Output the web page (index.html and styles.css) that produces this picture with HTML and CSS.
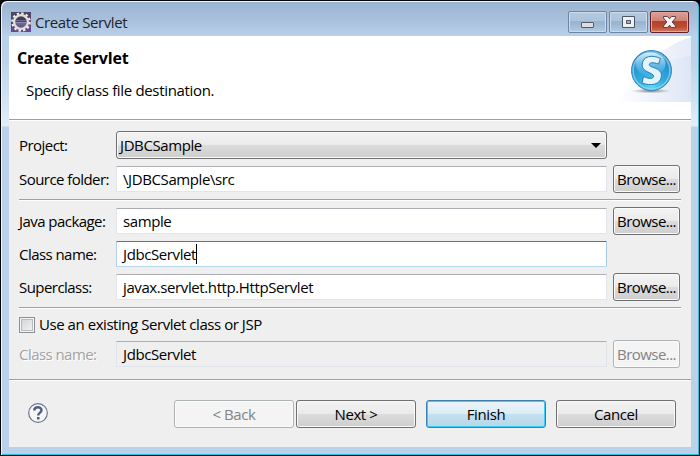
FILE: index.html
```
<!DOCTYPE html>
<html lang="en">
<head>
<meta charset="utf-8">
<title>Create Servlet</title>
<link rel="stylesheet" href="styles.css">
</head>
<body>
<div class="window">
  <div class="titlebar">
    <svg class="app-icon" width="20" height="20" viewBox="0 0 20 20">
      <defs><linearGradient id="core" x1="0" y1="0" x2="0" y2="1"><stop offset="0" stop-color="#4d4164"/><stop offset=".45" stop-color="#3c3452"/><stop offset=".5" stop-color="#77719a"/><stop offset="1" stop-color="#584b79"/></linearGradient></defs>
      <rect width="20" height="20" fill="#4c4566"/>
      <path d="M0 16 20 6V20H0z" fill="#654a8d"/>
      <circle cx="10" cy="10" r="8.700" fill="none" stroke="#f1efe9" stroke-width="2.200" stroke-dasharray="2.400 2.155"/>
      <circle cx="10" cy="10" r="6.900" fill="url(#core)" stroke="#e2dfd9" stroke-width="2.300"/>
      <path d="M5 8.500H15M4.800 10.500H15.200" stroke="#a9a2c2" stroke-width=".5"/>
    </svg>
    <span class="caption">Create Servlet</span>
    <div class="controls">
      <div class="control"><svg width="39" height="22"><rect x="13.500" y="11.500" width="12" height="5" rx=".5" fill="#dedede" stroke="#555b68"/></svg></div>
      <div class="control"><svg width="39" height="22"><path fill-rule="evenodd" d="M13.500 5.500h12v11h-12zM17.500 9.500v3h4v-3z" fill="#f0f0f0" stroke="#4d5566"/></svg></div>
      <div class="control close"><svg width="39" height="22"><path d="M13.500 5.500h4l2 2.300 2-2.300h4v1.500l-3.300 4 3.300 4v1.500h-4l-2-2.300-2 2.300h-4V15l3.300-4-3.300-4z" fill="#f5f1f1" stroke="#633f48"/></svg></div>
    </div>
  </div>
  <div class="content">
    <div class="header">
      <div class="heading">
        <h1>Create Servlet</h1>
        <p>Specify class file destination.</p>
      </div>
      <svg class="banner" width="75" height="66" viewBox="0 0 75 66">
        <defs>
          <linearGradient id="sweep"><stop offset=".1" stop-color="#fff"/><stop offset="1" stop-color="#e5ebf8"/></linearGradient>
          <linearGradient id="sweep2"><stop offset="0" stop-color="#fff"/><stop offset="1" stop-color="#dce4f5"/></linearGradient>
          <radialGradient id="ball" cx=".5" cy=".88" r=".75"><stop offset="0" stop-color="#5bdcfa"/><stop offset=".45" stop-color="#2fa9de"/><stop offset="1" stop-color="#238bc7"/></radialGradient>
          <linearGradient id="gloss" x1="0" y1="0" x2="0" y2="1"><stop offset="0" stop-color="#d9f2fc"/><stop offset="1" stop-color="#58b9e6" stop-opacity=".25"/></linearGradient>
          <radialGradient id="shade"><stop offset="0" stop-color="#777"/><stop offset="1" stop-color="#999" stop-opacity="0"/></radialGradient>
        </defs>
        <path d="M0 66C15 42 40 12 75 1V66z" fill="url(#sweep)"/>
        <path d="M0 66C22 38 44 24 75 20V66z" fill="url(#sweep2)" opacity=".8"/>
        <ellipse cx="35" cy="55" rx="20" ry="2.300" fill="url(#shade)"/>
        <circle cx="35.500" cy="34.500" r="20" fill="url(#ball)" stroke="#3b87bd"/>
        <circle cx="35.500" cy="34.500" r="18.400" fill="none" stroke="#9ed9f2" stroke-width="1.500" opacity=".7"/>
        <ellipse cx="34.500" cy="28" rx="15" ry="11.500" fill="url(#gloss)"/>
        <path d="M44.500 22.500 42.500 28C36.500 26 33.500 26.600 33.300 28.600 33 32 46 31.500 45.500 39.500 45 49.500 34 50 26 47L27.500 40.500C33 43.200 37.500 43 37.600 40.300 37.700 36.500 26 36.500 26.100 29 26.500 19.500 36.500 18.500 44.500 22.500z" fill="#e2f5fd" stroke="#2d78b5"/>
      </svg>
    </div>
    <div class="form">
      <div class="row"><label>Project:</label><div class="combo"><span>JDBCSample</span><svg width="10" height="5"><path d="M0 0H10L5 5z"/></svg></div></div>
      <div class="row"><label>Source folder:</label><div class="field">\JDBCSample\src</div><div class="button browse">Browse...</div></div>
      <div class="rule"></div>
      <div class="row"><label>Java package:</label><div class="field">sample</div><div class="button browse">Browse...</div></div>
      <div class="row short"><label>Class name:</label><div class="field focus">JdbcServlet<i class="caret"></i></div></div>
      <div class="row"><label>Superclass:</label><div class="field">javax.servlet.http.HttpServlet</div><div class="button browse">Browse...</div></div>
      <div class="rule"></div>
      <div class="check-row"><span class="check"></span><span class="check-label">Use an existing Servlet class or JSP</span></div>
      <div class="row"><label class="off">Class name:</label><div class="field readonly">JdbcServlet</div><div class="button browse disabled">Browse...</div></div>
    </div>
    <div class="footer">
      <svg class="help" width="20" height="20" viewBox="0 0 20 20"><circle cx="10" cy="10" r="9.300" fill="#f7f7f8" stroke="#6b7690" stroke-width="1.200"/><path d="M6.300 7.500C6.300 3.300 13.500 3.300 13.500 7.200 13.500 9.700 10.200 9.600 10.200 12.600" fill="none" stroke="#506084" stroke-width="2.500"/><rect x="9" y="14" width="2.500" height="2.500" fill="#506084"/></svg>
      <div class="button disabled">&lt; Back</div>
      <div class="button next">Next &gt;</div>
      <div class="button finish">Finish</div>
      <div class="button cancel">Cancel</div>
    </div>
  </div>
</div>
</body>
</html>
```
FILE: styles.css
```
* { box-sizing: border-box; }
body {
  margin: 0;
  background: #000;
  font: 15px/20px "Open Sans", "Noto Sans", sans-serif;
  letter-spacing: -0.4px;
  color: #000;
}
svg { display: block; flex: none; }
.window {
  width: 700px;
  height: 456px;
  padding: 0 7px 7px;
  border: 1px solid #050608;
  border-radius: 7px 7px 0 0;
  background: linear-gradient(#9ab3d0 0, #a9c1dc 20px, #b9d0ea 35px, #bdd3eb 60px, #e2edf8 125px, #b9d1ea 126px, #b9d1ea 100%);
  box-shadow: inset 1px 1px #eef5fb, inset -1px -1px #20c4df;
}
.titlebar {
  height: 35px;
  display: flex;
  align-items: flex-start;
  padding: 10px 3px 0;
}
.app-icon { margin-top: 1px; }
.caption { margin: 1px 0 0 4px; color: #20252d; }
.controls { display: flex; gap: 2px; margin-left: auto; }
.control {
  width: 39px;
  height: 22px;
  border: 1px solid #6e86a5;
  border-radius: 2px;
  background: linear-gradient(#b5cae0 0, #abc3db 45%, #96b2cf 48%, #b3cae2);
  box-shadow: inset 0 0 0 1px #c9dbed;
}
.control svg { margin: -1px; }
.close {
  border-color: #611f2b;
  background: linear-gradient(#dea096 0, #cf8275 43%, #b63f28 46%, #bc4c34 75%, #cf8065);
  box-shadow: inset 0 0 0 1px #dfa79e;
}
.content { height: 411px; margin: 0 1px; background: #efefef; }
.header {
  height: 85px;
  display: flex;
  justify-content: space-between;
  background: #fff;
  border-bottom: 1px solid #fff;
  box-shadow: inset 0 -1px #a0a0a0;
}
.heading { padding: 12px 0 0 8px; }
h1 { margin: 0; font-size: 16px; line-height: 20px; letter-spacing: -0.1px; }
p { margin: 12px 0 0 9px; letter-spacing: -0.33px; }
.form {
  display: flex;
  flex-direction: column;
  gap: 6px;
  height: 258px;
  padding: 10px 10px 0;
}
.row { display: flex; align-items: center; height: 28px; flex: none; }
.short { height: 26px; }
label { width: 97px; white-space: nowrap; letter-spacing: -0.55px; }
.off { color: #a2a2a2; text-shadow: 1px 1px #fff; }
.combo, .button {
  border: 1px solid #707070;
  border-radius: 3px;
  background: linear-gradient(#f3f3f3, #ebebeb 48%, #dcdcdc 50%, #cecece);
  box-shadow: inset 0 0 0 1px #fafafa;
}
.combo {
  display: flex;
  align-items: center;
  justify-content: space-between;
  width: 491px;
  height: 28px;
  padding: 0 5px 0 3px;
}
.field {
  display: flex;
  align-items: center;
  width: 491px;
  height: 26px;
  padding-left: 6px;
  border: 1px solid #e2e4eb;
  border-top-color: #abadb3;
  border-radius: 1px;
  background: #fff;
}
.focus { border-color: #3d7bad #a4c9e3 #b7d9ed #b5cfe7; }
.readonly { background: #efefef; }
.caret { width: 1px; height: 20px; background: #000; }
.button {
  width: 120px;
  height: 28px;
  line-height: 26px;
  text-align: center;
  white-space: nowrap;
}
.browse { width: 67px; margin-left: 6px; letter-spacing: -0.55px; }
.disabled { color: #838383; background: #f4f4f4; border-color: #adb2b5; box-shadow: inset 0 0 0 1px #fcfcfc; }
.rule { height: 2px; flex: none; background: #fff; border-top: 1px solid #a0a0a0; }
.check-row { height: 19px; flex: none; display: flex; align-items: center; }
.check {
  width: 16px;
  height: 16px;
  border: 1px solid #8e8f8f;
  background: linear-gradient(135deg, #ced1d5, #f5f5f5);
  box-shadow: inset 0 0 0 1px #f4f4f4, inset 0 0 0 2px #b9bcc2;
}
.check-label { margin: -2px 0 0 4px; letter-spacing: -0.45px; }
.footer {
  height: 68px;
  display: flex;
  align-items: flex-start;
  padding: 19px 15px 0 19px;
  border-top: 1px solid #a0a0a0;
  box-shadow: inset 0 1px #fff;
}
.footer .button { margin-top: 1px; }
.help { margin: 4px 126px 0 0; }
.footer .next { margin-left: 2px; }
.footer .finish {
  margin-left: 10px;
  border-color: #3c7fb1;
  background: linear-gradient(#edf5fa, #dcecf5 48%, #c5e0ef 50%, #b5d8eb);
  box-shadow: inset 0 0 0 1px #3ccdf7;
}
.footer .cancel { margin-left: 10px; }
```
